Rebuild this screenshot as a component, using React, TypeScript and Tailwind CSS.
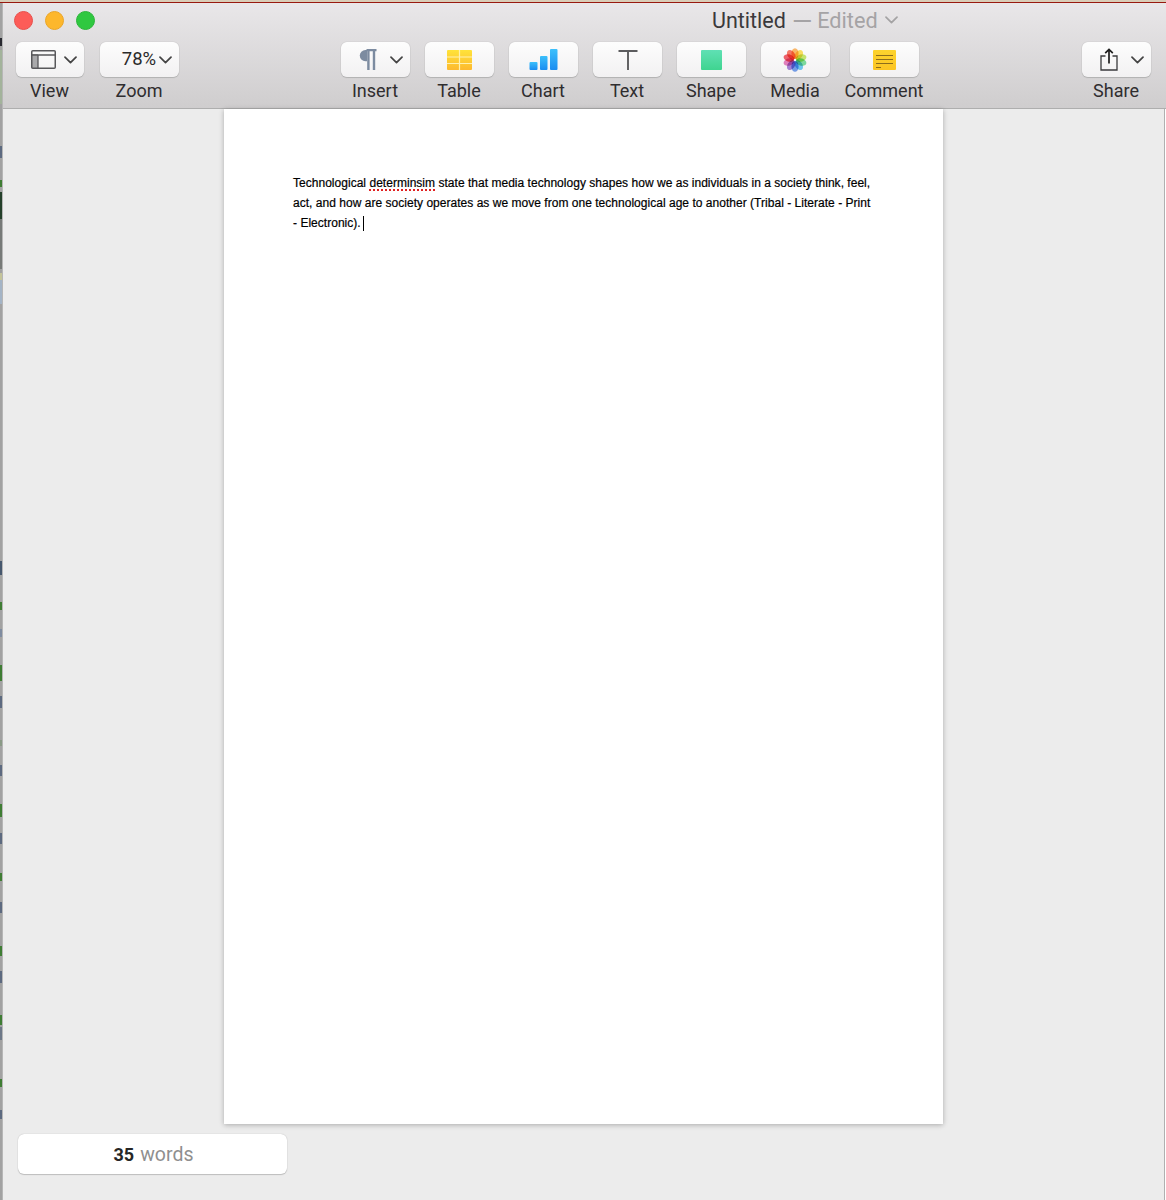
import React from "react";

const Chevron = ({ className = "" }: { className?: string }) => (
  <svg width="13" height="8" viewBox="0 0 13 8" className={className} fill="none" stroke="#444" strokeWidth="1.7" strokeLinecap="round" strokeLinejoin="round">
    <path d="M1 1.2 6.5 6.6 12 1.2" />
  </svg>
);

const ViewIcon = () => (
  <svg width="25" height="19" viewBox="0 0 25 19">
    <rect x="0.5" y="4" width="6.5" height="14" fill="#a9a9ab" />
    <rect x="0.75" y="0.75" width="23.5" height="17.5" rx="1" fill="none" stroke="#58585b" strokeWidth="1.5" />
    <path d="M1 5h23M7 5v13" stroke="#58585b" strokeWidth="1.3" fill="none" />
  </svg>
);

const Pilcrow = () => (
  <svg width="18" height="21" viewBox="0 0 18 21">
    <path d="M8 1H6.4A5.6 5.6 0 0 0 6.4 12.2H8Z" fill="#7c8ba0" />
    <path d="M7.5 1.1h10M9.4 1v20M15 1v20" stroke="#7c8ba0" strokeWidth="2.4" fill="none" />
  </svg>
);

const TableIcon = () => (
  <svg width="25" height="20" viewBox="0 0 25 20">
    <defs>
      <linearGradient id="tb" x1="0" y1="0" x2="0" y2="1">
        <stop offset="0" stopColor="#ffe33a" />
        <stop offset="1" stopColor="#fdb92e" />
      </linearGradient>
    </defs>
    <rect width="25" height="20" rx="1" fill="url(#tb)" />
    <path d="M12.5 0v20M0 7h25M0 13.5h25" stroke="#fff1ae" strokeWidth="1.2" />
  </svg>
);

const ChartIcon = () => (
  <svg width="29" height="21" viewBox="0 0 28 21" className="mr-[1px]">
    <defs>
      <linearGradient id="cb" x1="0" y1="0" x2="0" y2="1">
        <stop offset="0" stopColor="#3cc0fb" />
        <stop offset="1" stopColor="#1a8cf1" />
      </linearGradient>
    </defs>
    <rect x="0" y="13" width="8" height="8" rx="1" fill="url(#cb)" />
    <rect x="10.5" y="7" width="7.5" height="14" rx="1" fill="url(#cb)" />
    <rect x="20.5" y="0" width="7.5" height="21" rx="1" fill="url(#cb)" />
  </svg>
);

const TextIcon = () => (
  <svg width="20" height="20" viewBox="0 0 20 20">
    <path d="M0.5 1h19M10 1v19" stroke="#5c5c5e" strokeWidth="1.9" fill="none" />
  </svg>
);

const ShapeIcon = () => <div className="w-[21px] h-[20px] rounded-[1px] bg-gradient-to-b from-[#5fe0b4] to-[#3fd490]" />;

const petals = ["#f9a03a", "#f8d430", "#b4dc45", "#55cf80", "#44b6e8", "#4a7fe0", "#8a5cc8", "#d85aa8", "#e8303c", "#f0503a"];

const MediaIcon = () => (
  <svg width="24" height="24" viewBox="-12 -12 24 24" className="isolate mr-[1px]">
    {petals.map((c, i) => (
      <ellipse key={c} cx="0" cy="-6.4" rx="3.6" ry="5.4" fill={c} fillOpacity="0.76" className="mix-blend-multiply" transform={`rotate(${i * 36})`} />
    ))}
    <circle r="1.1" fill="#fff" fillOpacity="0.75" />
  </svg>
);

const CommentIcon = () => (
  <div className="w-[23px] h-[20px] rounded-[1px] bg-gradient-to-b from-[#fdd32e] to-[#fcc524] flex flex-col gap-[3px] pt-[5px] px-[3px]">
    <div className="h-[1px] bg-[#8d6d1c]" />
    <div className="h-[1px] bg-[#8d6d1c]" />
    <div className="h-[1px] bg-[#8d6d1c]" />
    <div className="h-[1px] w-[5px] bg-[#8d6d1c]" />
  </div>
);

const ShareIcon = () => (
  <svg width="18" height="23" viewBox="0 0 18 23" fill="none" stroke="#3a3a3c" strokeWidth="1.3">
    <path d="M5.5 8H1v14h16V8h-4.5" />
    <path d="M9 15.5V1.5M5.2 5.2 9 1.5l3.8 3.7" stroke="#1e1e1e" strokeWidth="1.7" />
  </svg>
);

const G = "#3f7d34";
const B = "#5d6a80";
const spots: [number, number, string][] = [
  [38, 8, "#2a2a32"], [50, 54, "#a3b39b"], [146, 12, B], [180, 7, G], [192, 27, "#24402a"], [219, 50, "#777a78"],
  [273, 7, "#c4c49a"], [280, 24, "#a4b4c6"], [561, 14, "#47586e"], [602, 8, G], [629, 8, "#7f8ca0"], [665, 16, G],
  [696, 12, B], [740, 6, "#8a9a86"], [765, 11, B], [804, 13, G], [833, 11, B], [873, 8, G], [902, 11, B],
  [946, 10, G], [971, 12, B], [1015, 10, G], [1027, 13, "#6d7888"], [1079, 8, G], [1110, 9, B],
];

const DesktopEdge = () => (
  <svg width="3" height="1197" viewBox="0 0 3 1197" className="shrink-0 block">
    <rect width="3" height="1197" fill="#a2a2a2" />
    <rect x="2.2" width="0.8" height="1197" fill="#bcbcbc" />
    {spots.map(([y, h, c]) => (
      <rect key={y} x="0" y={y - 3} width="2" height={h} fill={c} />
    ))}
  </svg>
);

function Tool({ label, width, children }: { label: string; width: string; children: React.ReactNode }) {
  return (
    <div className={`flex flex-col items-center ${width}`}>
      <div className="w-full h-[35px] bg-gradient-to-b from-[#fdfdfd] to-[#f2f1f2] rounded-[6px] shadow-[0_0_1px_#9c9c9c,0_1px_1px_#b4b4b4] flex items-center justify-center">
        {children}
      </div>
      <div className="mt-[3px] mr-[1px] text-[18px] leading-[22px] text-[#2f2d2f] whitespace-nowrap">{label}</div>
    </div>
  );
}

export default function App() {
  return (
    <div className="w-[1166px] h-[1200px] overflow-hidden flex flex-col bg-white font-['Roboto',sans-serif]">
      <div className="h-[3px] shrink-0 flex flex-col">
        <div className="h-[2px] bg-[#d9cdb8]" />
        <div className="h-[1px] bg-[#98190f]" />
      </div>
      <div className="flex-1 flex min-h-0">
        <DesktopEdge />
        <div className="flex-1 flex flex-col min-w-0">
          <header className="h-[106px] shrink-0 bg-gradient-to-b from-[#e9e7e9] to-[#cfcdce] border-b border-[#aeaeae] flex flex-col">
            <div className="h-[36px] shrink-0 flex items-center pl-[11px]">
              <div className="flex gap-[12px] mt-[-1px]">
                <div className="w-[19px] h-[19px] rounded-full bg-[#fd5c58] border border-[#e8504c]" />
                <div className="w-[19px] h-[19px] rounded-full bg-[#fdb72c] border border-[#eba527]" />
                <div className="w-[19px] h-[19px] rounded-full bg-[#2fc840] border border-[#2cb53a]" />
              </div>
              <div className="ml-[617px] mt-[-1px] flex items-center text-[21.5px] leading-[24px] whitespace-nowrap">
                <span className="text-[#3b393b]">Untitled</span>
                <span className="text-[#a5a3a5] ml-[6px] text-[26px]">—</span>
                <span className="text-[#a5a3a5] ml-[5px] text-[21.7px]">Edited</span>
                <Chevron className="ml-[7px] mt-[-2px] opacity-40" />
              </div>
            </div>
            <div className="flex-1 flex pl-[13px] pt-[3px]">
              <div className="flex gap-[16px]">
                <Tool label="View" width="w-[68px]">
                  <div className="ml-[8px] flex items-center">
                    <ViewIcon />
                    <Chevron className="ml-[8px]" />
                  </div>
                </Tool>
                <Tool label="Zoom" width="w-[79px]">
                  <span className="text-[18.5px] text-[#2b2b2b] ml-[15px]">78%</span>
                  <Chevron className="ml-[3px]" />
                </Tool>
              </div>
              <div className="flex gap-[15px] ml-[162px]">
                <Tool label="Insert" width="w-[69px]">
                  <div className="ml-[10px] flex items-center">
                    <Pilcrow />
                    <Chevron className="ml-[13px]" />
                  </div>
                </Tool>
                <Tool label="Table" width="w-[69px]"><TableIcon /></Tool>
                <Tool label="Chart" width="w-[69px]"><ChartIcon /></Tool>
                <Tool label="Text" width="w-[69px]"><TextIcon /></Tool>
                <Tool label="Shape" width="w-[69px]"><ShapeIcon /></Tool>
                <Tool label="Media" width="w-[69px]"><MediaIcon /></Tool>
                <div className="ml-[5px]">
                  <Tool label="Comment" width="w-[69px]"><CommentIcon /></Tool>
                </div>
              </div>
              <div className="ml-[163px]">
                <Tool label="Share" width="w-[69px]">
                  <div className="ml-[11px] flex items-center">
                    <ShareIcon />
                    <Chevron className="ml-[13px]" />
                  </div>
                </Tool>
              </div>
            </div>
          </header>
          <main className="flex-1 min-h-0 flex flex-col bg-[#ececec] mr-[1px] border-r border-[#b0b0b0]">
            <div className="ml-[221px] w-[719px] h-[1015px] shrink-0 bg-white shadow-[0_1px_5px_rgba(0,0,0,0.28)] pt-[65px] pl-[69px] font-['Liberation_Sans',sans-serif] text-[12px] leading-[19.8px] tracking-[0.026px] text-black [-webkit-text-stroke:0.2px_black]">
              <p className="whitespace-nowrap">
                Technological{" "}
                <span className="underline decoration-dotted decoration-[#e02020] decoration-2 underline-offset-2">determinsim</span>{" "}
                state that media technology shapes how we as individuals in a society think, feel,
              </p>
              <p className="whitespace-nowrap">act, and how are society operates as we move from one technological age to another (Tribal - Literate - Print</p>
              <p className="whitespace-nowrap flex items-center">
                - Electronic).
                <span className="inline-block w-[1px] h-[15px] bg-black ml-[2px]" />
              </p>
            </div>
            <div className="ml-[15px] mt-[10px] w-[269px] h-[40px] rounded-[6px] bg-white shadow-[0_0_1px_#a8a8a8,0_1px_1px_#c0c0c0] flex items-center justify-center pt-[1px] pl-[2px] text-[18px]">
              <span className="font-bold text-[#262626]">35</span>
              <span className="text-[#8f8f8f] ml-[6px] text-[19.5px]">words</span>
            </div>
          </main>
        </div>
      </div>
    </div>
  );
}
